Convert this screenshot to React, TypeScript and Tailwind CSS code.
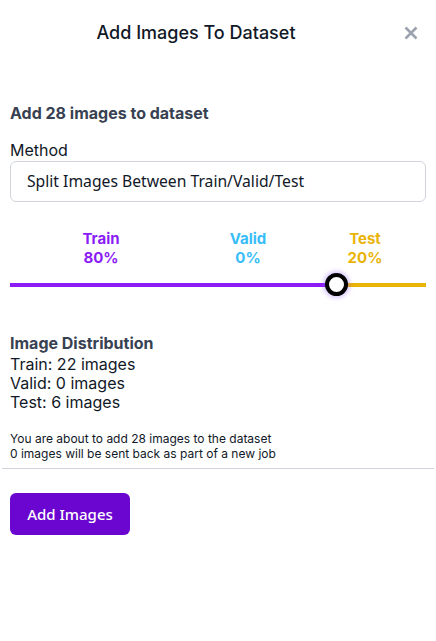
import React from 'react';

const inter = { fontFamily: 'Inter, "Liberation Sans", sans-serif' };

const Label: React.FC<{ name: string; pct: string; color: string; width: string }> = ({ name, pct, color, width }) => (
  <div className={`${width} text-center font-bold text-[15px] leading-[19px] ${color}`}>
    <div>{name}</div>
    <div>{pct}</div>
  </div>
);

export default function App() {
  return (
    <div className="w-[436px] h-[641px] bg-white text-[#111827] font-['Inter',sans-serif]">
      {/* Header */}
      <div className="flex items-center px-[10px] pt-[21px] h-[45px]">
        <h1 className="flex-1 text-center text-[18px] font-medium text-[#111827] leading-[24px]">Add Images To Dataset</h1>
        <button className="w-[44px] flex justify-end pr-[8px] text-[#9ca3af]">
          <svg width="14" height="14" viewBox="0 0 14 14" fill="none" stroke="currentColor" strokeWidth="2.6" strokeLinecap="butt">
            <path d="M1.5 1.5 L12.5 12.5 M12.5 1.5 L1.5 12.5" />
          </svg>
        </button>
      </div>

      <div className="px-[10px]">
        <h2 className="mt-[58px] text-[16px] font-bold text-[#374151] leading-[20px]">Add 28 images to dataset</h2>

        <div className="mt-[17px] text-[16px] leading-[20px] text-[#111827]">Method</div>
        <div className="mt-[1px] h-[41px] border border-[#d1d5db] rounded-[6px] flex items-center pl-[16px] text-[15.7px] text-[#111827] font-['Noto_Sans',sans-serif]">
          Split Images Between Train/Valid/Test
        </div>

        {/* Split labels */}
        <div className="mt-[27px] flex">
          <Label name="Train" pct="80%" color="text-[#8b1cf6]" width="w-[182px]" />
          <Label name="Valid" pct="0%" color="text-[#38bdf8]" width="w-[112px]" />
          <Label name="Test" pct="20%" color="text-[#eab308]" width="w-[122px]" />
        </div>

        {/* Slider */}
        <div className="mt-[6px] h-[24px] flex items-center relative">
          <div className="h-[4px] w-[326px] bg-[#8b1cf6]" />
          <div className="h-[4px] flex-1 bg-[#eab308]" />
          <div className="absolute left-[315px] top-[0px] w-[23px] h-[23px] rounded-full bg-white border-[4px] border-black shadow-[0_0_4px_2px_rgba(139,92,246,0.35)]" />
        </div>

        <h3 className="mt-[36px] text-[16px] font-bold text-[#374151] leading-[20px]">Image Distribution</h3>
        <div className="mt-[2px] text-[16px] leading-[19px] text-[#111827]" style={inter}>
          <div>Train: 22 images</div>
          <div>Valid: 0 images</div>
          <div>Test: 6 images</div>
        </div>

        <div className="mt-[19px] text-[12px] leading-[15px] text-[#111827]">
          <div>You are about to add 28 images to the dataset</div>
          <div>0 images will be sent back as part of a new job</div>
        </div>
      </div>

      <div className="mt-[7px] mx-[2px] border-t border-[#d1d5db]" />

      <div className="px-[10px] pt-[24px]">
        <button className="h-[42px] w-[120px] rounded-[6px] bg-[#6b06d1] text-white text-[15px] font-medium font-['Noto_Sans',sans-serif]">
          Add Images
        </button>
      </div>
    </div>
  );
}
